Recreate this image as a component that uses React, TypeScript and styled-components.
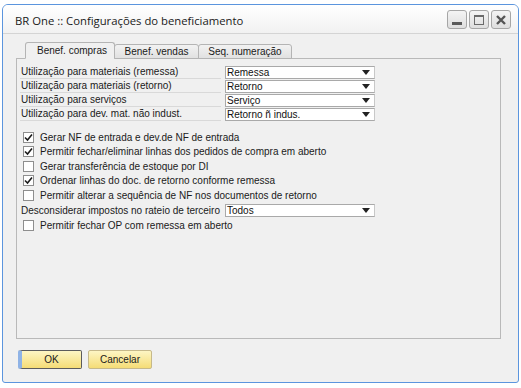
import React from 'react';
import styled, {createGlobalStyle} from 'styled-components';

const GlobalStyle = createGlobalStyle`
  body {
    margin: 0;
    background: #ffffff;
    font-family: "Liberation Sans", Arial, sans-serif;
  }
`;

const fields = [
  {label: 'Utilização para materiais (remessa)', value: 'Remessa'},
  {label: 'Utilização para materiais (retorno)', value: 'Retorno'},
  {label: 'Utilização para serviços', value: 'Serviço'},
  {label: 'Utilização para dev. mat. não indust.', value: 'Retorno ñ indus.'},
];

const options = [
  {label: 'Gerar NF de entrada e dev.de NF de entrada', checked: true},
  {label: 'Permitir fechar/eliminar linhas dos pedidos de compra em aberto', checked: true},
  {label: 'Gerar transferência de estoque por DI', checked: false},
  {label: 'Ordenar linhas do doc. de retorno conforme remessa', checked: true},
  {label: 'Permitir alterar a sequência de NF nos documentos de retorno', checked: false},
];

const Check: React.FC<{checked: boolean}> = ({checked}) => (
  <Box>
    {checked && (
      <svg width="9" height="9" viewBox="0 0 9 9">
        <path d="M1 4.5 L3.5 7 L8 1.5" stroke="#1c1c1c" strokeWidth="1.6" fill="none" />
      </svg>
    )}
  </Box>
);

const Select: React.FC<{value: string}> = ({value}) => (
  <SelectBox>
    <SelectText>{value}</SelectText>
    <svg width="8" height="5" viewBox="0 0 8 5">
      <path d="M0 0 H8 L4 5 Z" fill="#222" />
    </svg>
  </SelectBox>
);

const App: React.FC = () => {
  return (
    <>
      <GlobalStyle />
      <Window>
        <TitleBar>
          <Title>BR One :: Configurações do beneficiamento</Title>
          <Controls>
            <CtrlButton>
              <svg width="12" height="12" viewBox="0 0 12 12">
                <rect x="1" y="8" width="10" height="3" fill="#5a5a5a" />
              </svg>
            </CtrlButton>
            <CtrlButton>
              <svg width="12" height="12" viewBox="0 0 12 12">
                <rect x="1.5" y="1.5" width="9" height="9" fill="none" stroke="#6a6a6a" strokeWidth="1" />
                <rect x="1" y="1" width="10" height="2" fill="#6a6a6a" />
              </svg>
            </CtrlButton>
            <CtrlButton>
              <svg width="12" height="12" viewBox="0 0 12 12">
                <path d="M2 2 L10 10 M10 2 L2 10" stroke="#555" strokeWidth="2.4" />
              </svg>
            </CtrlButton>
          </Controls>
        </TitleBar>
        <Content>
          <Tabs>
            <Tab active width={90}>Benef. compras</Tab>
            <Tab width={85}>Benef. vendas</Tab>
            <Tab width={94}>Seq. numeração</Tab>
          </Tabs>
          <Panel>
            <Fields>
              {fields.map(f => (
                <FieldRow key={f.label}>
                  <FieldLabel>{f.label}</FieldLabel>
                  <Select value={f.value} />
                </FieldRow>
              ))}
            </Fields>
            <Options>
              {options.map(o => (
                <CheckRow key={o.label}>
                  <Check checked={o.checked} />
                  <CheckText>{o.label}</CheckText>
                </CheckRow>
              ))}
              <InlineRow>
                <InlineLabel>Desconsiderar impostos no rateio de terceiro</InlineLabel>
                <Select value="Todos" />
              </InlineRow>
              <CheckRow>
                <Check checked={false} />
                <CheckText>Permitir fechar OP com remessa em aberto</CheckText>
              </CheckRow>
            </Options>
          </Panel>
          <Footer>
            <Button primary>OK</Button>
            <Button>Cancelar</Button>
          </Footer>
        </Content>
      </Window>
    </>
  );
};

export default App;

const Window = styled.div`
  margin: 4px 0 0 2px;
  width: 515px;
  height: 377px;
  border: 1px solid #5b95de;
  border-radius: 6px 6px 3px 3px;
  background: #f0f0f0;
  display: flex;
  flex-direction: column;
  overflow: hidden;
`;

const TitleBar = styled.div`
  height: 28px;
  flex: none;
  display: flex;
  align-items: center;
  justify-content: space-between;
  padding: 0 7px 0 12px;
  background: linear-gradient(#ffffff, #f1f1f1);
  border-bottom: 1px solid #d4d4d4;
`;

const Title = styled.div`
  font-family: "Open Sans", "Noto Sans", sans-serif;
  font-size: 11.3px;
  color: #1a1a1a;
  padding-top: 2px;
`;

const Controls = styled.div`
  display: flex;
  gap: 2px;
  margin-top: 1px;
`;

const CtrlButton = styled.div`
  width: 18px;
  height: 17px;
  border: 1px solid #a6a6a6;
  border-radius: 3px;
  background: linear-gradient(#f4f4f4, #dedede);
  display: flex;
  align-items: center;
  justify-content: center;
`;

const Content = styled.div`
  flex: 1;
  display: flex;
  flex-direction: column;
  padding: 8px 17px 13px 13px;
`;

const Tabs = styled.div`
  display: flex;
  align-items: flex-end;
  height: 17px;
  padding-left: 9px;
  position: relative;
  z-index: 1;
  margin-bottom: -1px;
`;

const Tab = styled.div<{active?: boolean; width: number}>`
  width: ${p => p.width}px;
  height: ${p => (p.active ? '17px' : '15px')};
  box-sizing: border-box;
  display: flex;
  align-items: center;
  justify-content: center;
  padding-left: ${p => (p.active ? '4px' : '0')};
  font-size: 10px;
  color: #1a1a1a;
  border: 1px solid #b4b4b4;
  border-bottom: ${p => (p.active ? '1px solid #f0f0f0' : '1px solid #b4b4b4')};
  border-radius: 3px 3px 0 0;
  background: ${p => (p.active ? '#f0f0f0' : 'linear-gradient(#f2f2f2, #e1e1e1)')};
  margin-left: ${p => (p.active ? '0' : '-1px')};
`;

const Panel = styled.div`
  flex: 1;
  border: 1px solid #b9b9b9;
  padding: 6px 3px;
`;

const Fields = styled.div`
  display: flex;
  flex-direction: column;
`;

const FieldRow = styled.div`
  display: flex;
  align-items: center;
  height: 14px;
`;

const FieldLabel = styled.div`
  width: 201px;
  height: 14px;
  box-sizing: border-box;
  border-bottom: 1px solid #d9d9d9;
  font-size: 10px;
  line-height: 13px;
  color: #1a1a1a;
  padding-left: 1px;
  margin-right: 4px;
  white-space: nowrap;
`;

const SelectBox = styled.div`
  width: 150px;
  height: 13px;
  box-sizing: border-box;
  border: 1px solid #a9a9a9;
  border-right-color: #c8c8c8;
  background: #ffffff;
  display: flex;
  align-items: center;
  justify-content: space-between;
  padding: 0 4px 0 1px;
`;

const SelectText = styled.span`
  font-size: 10px;
  line-height: 11px;
  color: #111;
`;

const Options = styled.div`
  display: flex;
  flex-direction: column;
  margin-top: 9px;
`;

const CheckRow = styled.div`
  display: flex;
  align-items: center;
  height: 14.5px;
  padding-left: 3px;
`;

const Box = styled.div`
  width: 11px;
  height: 11px;
  box-sizing: border-box;
  border: 1px solid #8e8e8e;
  background: #ffffff;
  display: flex;
  align-items: center;
  justify-content: center;
  margin-right: 6px;
`;

const CheckText = styled.span`
  font-size: 10px;
  color: #1a1a1a;
  white-space: nowrap;
`;

const InlineRow = styled.div`
  display: flex;
  align-items: center;
  height: 16px;
  padding-left: 1px;
`;

const InlineLabel = styled.span`
  width: 204px;
  font-size: 10px;
  color: #1a1a1a;
  white-space: nowrap;
`;

const Footer = styled.div`
  display: flex;
  gap: 6px;
  padding: 11px 0 0 2px;
`;

const Button = styled.div<{primary?: boolean}>`
  width: 64px;
  height: 19px;
  box-sizing: border-box;
  border: 1px solid ${p => (p.primary ? '#5c5c5c' : '#c6b98a')};
  border-left: ${p => (p.primary ? '4px solid #8fb3e6' : '1px solid #c6b98a')};
  border-radius: 2px;
  background: linear-gradient(#fdf6c4, #f5dc76);
  display: flex;
  align-items: center;
  justify-content: center;
  font-size: 10px;
  color: #1a1a1a;
`;
